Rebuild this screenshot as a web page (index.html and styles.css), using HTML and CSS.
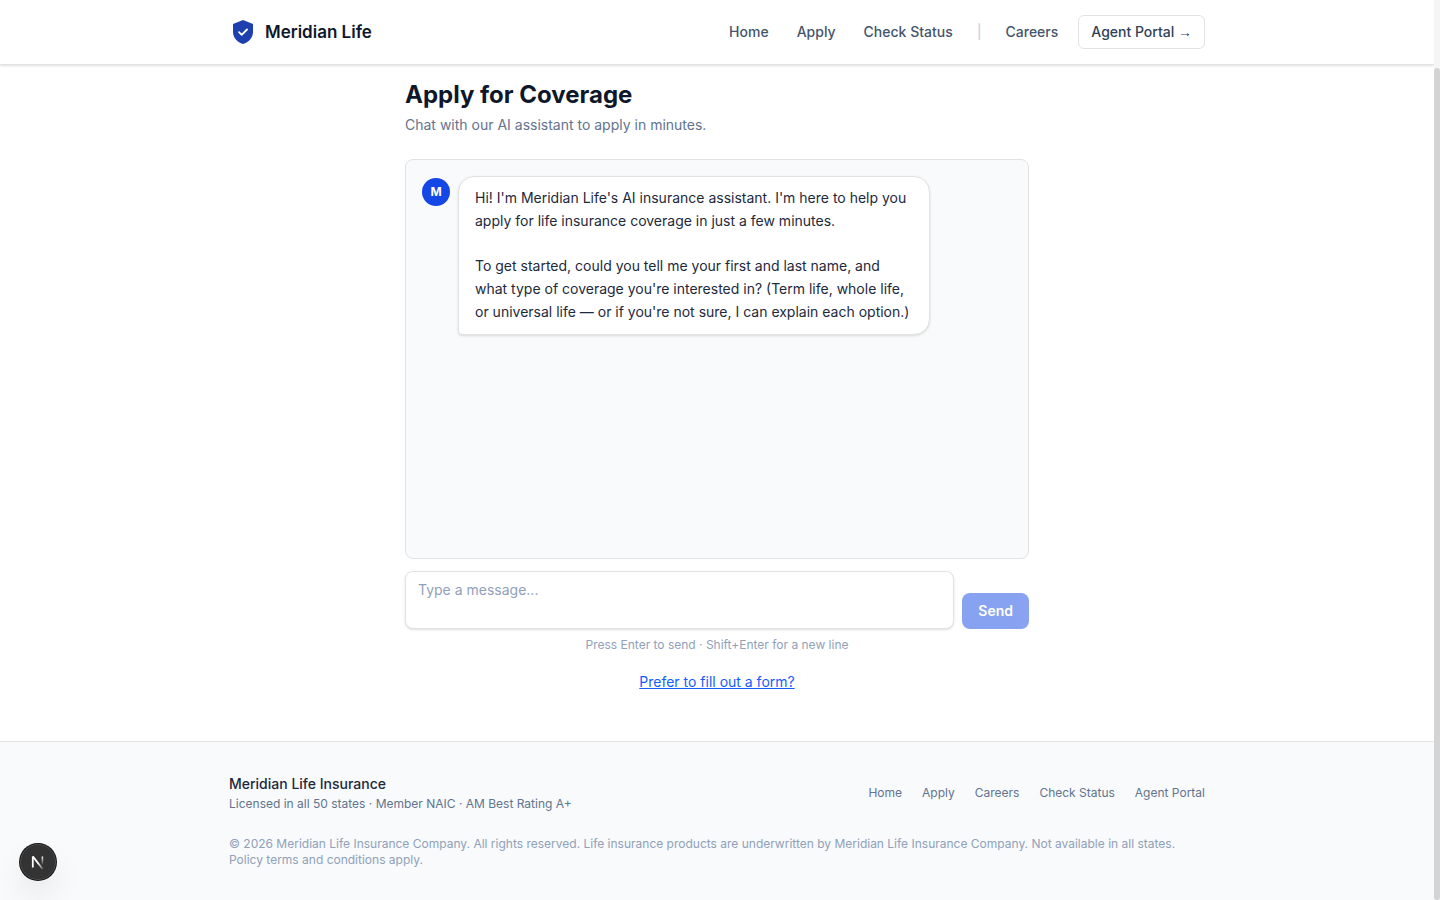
FILE: index.html
```
<!DOCTYPE html>
<html lang="en">

<head>
    <meta charset="UTF-8">
    <meta name="viewport" content="width=device-width, initial-scale=1.0">
    <title>Apply for Coverage | Meridian Life</title>
    <link rel="stylesheet" href="styles.css">
</head>

<body>

    <header class="site-header">
        <div class="container header-inner">
            <a href="#" class="logo">
                <svg width="28" height="28" viewBox="0 0 28 28" fill="none" aria-hidden="true">
                    <path d="M14 2L4 6v8c0 5.6 4.3 10.4 10 12 5.7-1.6 10-6.4 10-12V6L14 2z" fill="#1e40af" />
                    <path d="M10 14.2l2.7 2.7 5.3-5.4" stroke="#fff" stroke-width="1.8" stroke-linecap="round" stroke-linejoin="round" />
                </svg>
                <span>Meridian Life</span>
            </a>
            <nav class="main-nav">
                <a href="#">Home</a>
                <a href="#">Apply</a>
                <a href="#">Check Status</a>
                <span class="divider" aria-hidden="true">|</span>
                <div class="nav-end">
                    <a href="#">Careers</a>
                    <a href="#" class="portal-link">Agent Portal <span class="arrow">→</span></a>
                </div>
            </nav>
        </div>
    </header>

    <main class="apply">
        <h1>Apply for Coverage</h1>
        <p class="subtitle">Chat with our AI assistant to apply in minutes.</p>

        <div class="chat-window">
            <div class="message">
                <div class="avatar">M</div>
                <div class="bubble">
                    <p>Hi! I'm Meridian Life's AI insurance assistant. I'm here to help you apply for life insurance coverage in just a few minutes.</p>
                    <p>To get started, could you tell me your first and last name, and what type of coverage you're interested in? (Term life, whole life, or universal life — or if you're not sure, I can explain each option.)</p>
                </div>
            </div>
        </div>

        <form class="composer">
            <textarea id="message" rows="2" placeholder="Type a message..." aria-label="Message"></textarea>
            <button type="submit" class="send-btn" disabled>Send</button>
        </form>
        <p class="hint">Press Enter to send · Shift+Enter for a new line</p>
        <p class="form-switch"><a href="#">Prefer to fill out a form?</a></p>
    </main>

    <footer class="site-footer">
        <div class="container">
            <div class="footer-top">
                <div>
                    <p class="company">Meridian Life Insurance</p>
                    <p class="license">Licensed in all 50 states · Member NAIC · AM Best Rating A+</p>
                </div>
                <nav class="footer-nav">
                    <a href="#">Home</a>
                    <a href="#">Apply</a>
                    <a href="#">Careers</a>
                    <a href="#">Check Status</a>
                    <a href="#">Agent Portal</a>
                </nav>
            </div>
            <p class="copyright">© 2026 Meridian Life Insurance Company. All rights reserved. Life insurance products are underwritten by Meridian Life Insurance Company. Not available in all states. Policy terms and conditions apply.</p>
        </div>
    </footer>

    <button type="button" class="dev-badge" aria-label="Open dev tools">
        <svg width="16" height="16" viewBox="0 0 16 16" fill="none" aria-hidden="true">
            <defs>
                <linearGradient id="fade-diagonal" x1="8" y1="9" x2="13" y2="15" gradientUnits="userSpaceOnUse">
                    <stop stop-color="#fff" />
                    <stop offset="1" stop-color="#fff" stop-opacity="0.2" />
                </linearGradient>
                <linearGradient id="fade-stem" x1="12" y1="2" x2="12" y2="11" gradientUnits="userSpaceOnUse">
                    <stop stop-color="#fff" />
                    <stop offset="1" stop-color="#fff" stop-opacity="0" />
                </linearGradient>
            </defs>
            <path d="M2.8 13.5V2.5" stroke="#fff" stroke-width="1.8" />
            <path d="M2.8 2.4L12.6 15" stroke="url(#fade-diagonal)" stroke-width="1.8" />
            <path d="M12.4 2.5v8.5" stroke="url(#fade-stem)" stroke-width="1.6" />
        </svg>
    </button>

    <div class="scroll-track" aria-hidden="true">
        <div class="scroll-thumb"></div>
    </div>

</body>

</html>
```

FILE: styles.css
```
* {
    box-sizing: border-box;
    margin: 0;
    padding: 0;
}

body {
    display: flex;
    flex-direction: column;
    min-height: 100vh;
    padding-right: 6px;
    font-family: Inter, "Liberation Sans", sans-serif;
    font-size: 14px;
    line-height: 20px;
    color: #0f172b;
    background-color: #fff;
}

a {
    color: inherit;
    text-decoration: none;
}

.container {
    width: 100%;
    max-width: 1024px;
    margin: 0 auto;
    padding: 0 24px;
}

/* Header */
.site-header {
    background-color: #fff;
    border-bottom: 1px solid #e2e2e2;
    box-shadow: 0 1px 3px rgba(0, 0, 0, 0.1), 0 1px 2px -1px rgba(0, 0, 0, 0.1);
}

.header-inner {
    display: flex;
    align-items: center;
    justify-content: space-between;
    height: 64px;
}

.logo {
    display: flex;
    align-items: center;
    gap: 8px;
    font-size: 17px;
    font-weight: 600;
    line-height: 28px;
}

.main-nav {
    display: flex;
    align-items: center;
    gap: 28px;
    font-weight: 500;
    color: #45556c;
}

.divider {
    margin: 0 -4px;
    color: #cad5e2;
}

.nav-end {
    display: flex;
    align-items: center;
    gap: 20px;
}

.portal-link {
    padding: 6px 12px;
    border: 1px solid #e2e2e2;
    border-radius: 6px;
    color: #314158;
}

.arrow {
    font-family: "Liberation Sans", sans-serif;
}

/* Chat */
.apply {
    flex: 1;
    width: 100%;
    max-width: 672px;
    margin: 0 auto;
    padding: 14px 24px 48px;
}

h1 {
    font-size: 24px;
    font-weight: 700;
    line-height: 32px;
}

.subtitle {
    margin-top: 4px;
    color: #62748e;
}

.chat-window {
    min-height: 400px;
    margin-top: 24px;
    padding: 16px;
    background-color: #f8fafc;
    border: 1px solid #e2e2e2;
    border-radius: 8px;
}

.message {
    display: flex;
    align-items: flex-start;
    gap: 8px;
}

.avatar {
    display: flex;
    align-items: center;
    justify-content: center;
    flex-shrink: 0;
    width: 28px;
    height: 28px;
    margin-top: 2px;
    border-radius: 50%;
    background-color: #1447e6;
    color: #fff;
    font-size: 12px;
    font-weight: 700;
}

.bubble {
    max-width: 80%;
    padding: 9px 16px 11px;
    background-color: #fff;
    border: 1px solid #e2e2e2;
    border-radius: 16px 16px 16px 4px;
    box-shadow: 0 1px 3px rgba(0, 0, 0, 0.1), 0 1px 2px -1px rgba(0, 0, 0, 0.1);
    line-height: 23px;
    color: #1d293d;
}

.bubble p + p {
    margin-top: 22px;
}

.composer {
    display: flex;
    align-items: flex-end;
    gap: 8px;
    margin-top: 12px;
}

.composer textarea {
    flex: 1;
    padding: 8px 12px;
    border: 1px solid #e2e2e2;
    border-radius: 8px;
    box-shadow: 0 1px 3px rgba(0, 0, 0, 0.1), 0 1px 2px -1px rgba(0, 0, 0, 0.1);
    font: inherit;
    color: inherit;
    resize: none;
}

.composer textarea::placeholder {
    color: #90a1b9;
}

.send-btn {
    padding: 8px 16px;
    border: none;
    border-radius: 8px;
    background-color: #1447e6;
    color: #fff;
    font: inherit;
    font-weight: 600;
    cursor: pointer;
}

.send-btn:disabled {
    opacity: 0.5;
    cursor: default;
}

.hint {
    margin-top: 8px;
    font-size: 12px;
    line-height: 16px;
    text-align: center;
    color: #90a1b9;
}

.form-switch {
    margin-top: 19px;
    text-align: center;
}

.form-switch a {
    color: #155dfc;
    text-decoration: underline;
}

/* Footer */
.site-footer {
    padding: 32px 0;
    background-color: #f8fafc;
    border-top: 1px solid #e2e2e2;
    font-size: 12px;
    line-height: 16px;
}

.footer-top {
    display: flex;
    align-items: center;
    justify-content: space-between;
}

.company {
    font-size: 14px;
    font-weight: 500;
    line-height: 20px;
    color: #1d293d;
}

.license {
    margin-top: 2px;
    color: #62748e;
}

.footer-nav {
    display: flex;
    gap: 20px;
    color: #62748e;
}

.copyright {
    margin-top: 24px;
    color: #90a1b9;
}

/* Floating badge and page scrollbar */
.dev-badge {
    position: fixed;
    left: 20px;
    bottom: 20px;
    display: flex;
    align-items: center;
    justify-content: center;
    width: 36px;
    height: 36px;
    border: 1px solid #4a4a4a;
    border-radius: 50%;
    background-color: #333;
    box-shadow: 0 0 0 1px #171717, 0 16px 32px -8px rgba(0, 0, 0, 0.24);
    cursor: pointer;
}

.scroll-track {
    position: fixed;
    top: 0;
    right: 0;
    bottom: 0;
    width: 6px;
    padding-top: 68px;
    background-color: #f5f5f5;
}

.scroll-thumb {
    height: 100%;
    border-radius: 3px;
    background-color: #d4d4d4;
}
```
